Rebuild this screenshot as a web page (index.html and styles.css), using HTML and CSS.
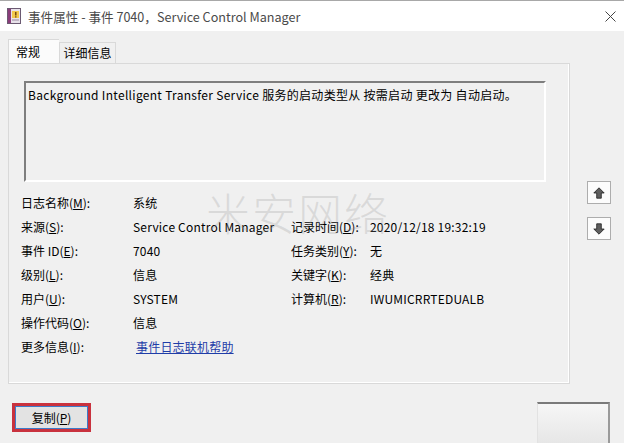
FILE: index.html
```html
<!DOCTYPE html>
<html lang="zh-CN">
<head>
    <meta charset="UTF-8">
    <title>事件属性</title>
    <link rel="stylesheet" href="styles.css">
</head>
<body>
    <div class="titlebar">
        <svg class="app-icon" width="14" height="16" viewBox="0 0 14 16">
            <rect x="0.5" y="0.5" width="13" height="15" fill="#e8e2ea" stroke="#6b5a72"/>
            <rect x="1" y="1" width="3" height="14" fill="#8a3d7a"/>
            <rect x="5" y="3" width="7" height="7" fill="#f2c94c"/>
            <rect x="8" y="4" width="1.5" height="3.5" fill="#7a4a10"/>
            <rect x="8" y="8.3" width="1.5" height="1.2" fill="#7a4a10"/>
            <rect x="5" y="11.5" width="7" height="1" fill="#9a8aa0"/>
        </svg>
        <span class="title-text">事件属性 - 事件 7040，Service Control Manager</span>
        <svg class="close" width="11" height="11" viewBox="0 0 11 11">
            <path d="M0.5 0.5 L10.5 10.5 M10.5 0.5 L0.5 10.5" stroke="#444" stroke-width="1"/>
        </svg>
    </div>

    <div class="dialog">
        <div class="tabs">
            <div class="tab active">常规</div>
            <div class="tab">详细信息</div>
        </div>

        <div class="main-row">
            <div class="panel">
                <div class="message">Background Intelligent Transfer Service 服务的启动类型从 按需启动 更改为 自动启动。</div>

                <div class="fields">
                    <div class="lbl">日志名称(<u>M</u>):</div>
                    <div class="val">系统</div>
                    <div></div>
                    <div></div>

                    <div class="lbl">来源(<u>S</u>):</div>
                    <div class="val">Service Control Manager</div>
                    <div class="lbl">记录时间(<u>D</u>):</div>
                    <div class="val">2020/12/18 19:32:19</div>

                    <div class="lbl">事件 ID(<u>E</u>):</div>
                    <div class="val">7040</div>
                    <div class="lbl">任务类别(<u>Y</u>):</div>
                    <div class="val">无</div>

                    <div class="lbl">级别(<u>L</u>):</div>
                    <div class="val">信息</div>
                    <div class="lbl">关键字(<u>K</u>):</div>
                    <div class="val">经典</div>

                    <div class="lbl">用户(<u>U</u>):</div>
                    <div class="val">SYSTEM</div>
                    <div class="lbl">计算机(<u>R</u>):</div>
                    <div class="val">IWUMICRRTEDUALB</div>

                    <div class="lbl">操作代码(<u>O</u>):</div>
                    <div class="val">信息</div>
                    <div></div>
                    <div></div>

                    <div class="lbl">更多信息(<u>I</u>):</div>
                    <div class="val"><a class="help-link" href="#">事件日志联机帮助</a></div>
                    <div></div>
                    <div></div>
                </div>
            </div>

            <div class="side">
                <div class="arrow-btn">
                    <svg width="12" height="12" viewBox="0 0 12 12">
                        <path d="M6 0.8 L11.2 6 L8.3 6 L8.3 11.2 L3.7 11.2 L3.7 6 L0.8 6 Z" fill="#5e5e5e" stroke="#1e1e1e" stroke-width="0.8"/>
                    </svg>
                </div>
                <div class="arrow-btn">
                    <svg width="12" height="12" viewBox="0 0 12 12">
                        <path d="M6 11.2 L11.2 6 L8.3 6 L8.3 0.8 L3.7 0.8 L3.7 6 L0.8 6 Z" fill="#5e5e5e" stroke="#1e1e1e" stroke-width="0.8"/>
                    </svg>
                </div>
            </div>
        </div>

        <div class="footer">
            <div class="copy-wrap">
                <button class="copy-btn" type="button">复制(<u>P</u>)</button>
            </div>
            <div class="ok-btn"></div>
        </div>
    </div>

    <!-- watermark sits over the dialog -->
    <div class="watermark">米安网络</div>
</body>
</html>
```

FILE: styles.css
```css
body {
    margin: 0;
    width: 624px;
    height: 443px;
    overflow: hidden;
    position: relative;
    background-color: #f0f0f0;
    font-family: "Noto Sans CJK SC", sans-serif;
    font-size: 12px;
    color: #000;
}
.titlebar {
    height: 30px;
    background-color: #fff;
    border-top: 1px solid #a8a8a8;
    display: flex;
    align-items: center;
    padding-left: 7px;
    padding-right: 8px;
}
.app-icon {
    flex: none;
}
.title-text {
    margin-left: 7px;
    font-size: 12.6px;
    color: #4a4a4a;
}
.close {
    margin-left: auto;
}
.dialog {
    padding: 8px 0 0 8px;
}
.tabs {
    display: flex;
    align-items: flex-end;
    height: 24px;
}
.tab {
    height: 20px;
    width: 55px;
    line-height: 20px;
    text-align: center;
    background-color: #f0f0f0;
    border: 1px solid #d9d9d9;
    border-bottom: none;
    font-size: 12px;
}
.tab.active {
    height: 23px;
    width: 49px;
    line-height: 23px;
    background-color: #fbfbfb;
    border-right: none;
    text-align: left;
    padding-left: 1px;
    text-indent: 6px;
}
.main-row {
    display: flex;
    align-items: flex-start;
}
.panel {
    width: 560px;
    height: 319px;
    border: 1px solid #d9d9d9;
    box-shadow: inset -1px -1px 0 #fff;
    background-color: #f0f0f0;
}
.message {
    margin: 17px 0 0 15px;
    width: 516px;
    height: 93px;
    border-top: 2px solid #7e7e7e;
    border-left: 2px solid #7e7e7e;
    border-right: 2px solid #fff;
    border-bottom: 2px solid #fff;
    padding: 4px 0 0 2px;
    font-size: 12px;
    line-height: 16px;
    letter-spacing: 0.3px;
}
.fields {
    margin: 8px 0 0 12px;
    display: grid;
    grid-template-columns: 112px 158px 79px auto;
    grid-auto-rows: 24px;
    align-items: center;
}
.lbl, .val {
    font-size: 12px;
    white-space: nowrap;
}
.val {
    letter-spacing: 0.2px;
}
.help-link {
    color: #1f3da8;
    margin-left: 3px;
}
.side {
    margin-left: 17px;
    padding-top: 118px;
    display: flex;
    flex-direction: column;
    gap: 13px;
}
.arrow-btn {
    width: 22px;
    height: 21px;
    border: 1px solid #adadad;
    background-color: #fcfcfc;
    display: flex;
    align-items: center;
    justify-content: center;
}
.footer {
    margin-top: 19px;
    display: flex;
    align-items: flex-start;
}
.copy-wrap {
    margin-left: 4px;
    border: 3px solid #c9323e;
    width: 73px;
    height: 23px;
}
.copy-btn {
    width: 100%;
    height: 100%;
    margin: 0;
    padding: 0;
    background-color: #e3e3e3;
    border: 1px solid #3d7bc9;
    font-family: "Noto Sans CJK SC", sans-serif;
    font-size: 12px;
    color: #000;
}
.ok-btn {
    margin-left: 446px;
    margin-top: -1px;
    width: 70px;
    height: 50px;
    border-top: 2px solid #7a7a7a;
    border-right: 2px solid #9a9a9a;
    border-left: 1px solid #e2e2e2;
    background: linear-gradient(#f6f6f6, #e2e2e2);
}
.watermark {
    position: absolute;
    left: 206px;
    top: 180px;
    font-size: 44px;
    font-weight: 300;
    letter-spacing: 2px;
    color: rgba(150, 150, 150, 0.25);
    pointer-events: none;
}
```
